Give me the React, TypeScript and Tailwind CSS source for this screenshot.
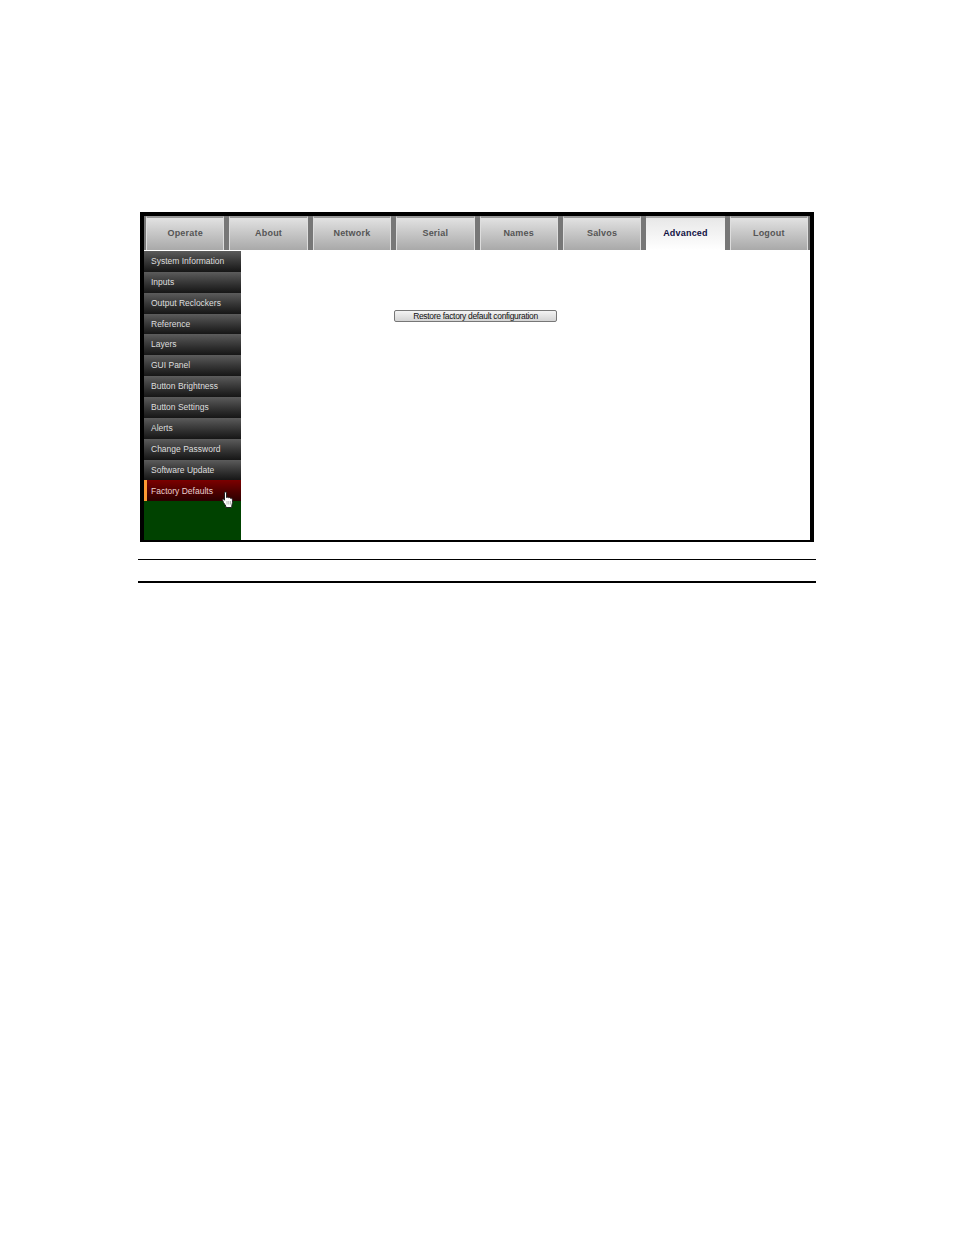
const tabs = ["Operate", "About", "Network", "Serial", "Names", "Salvos", "Advanced", "Logout"];

const menu = [
  "System Information",
  "Inputs",
  "Output Reclockers",
  "Reference",
  "Layers",
  "GUI Panel",
  "Button Brightness",
  "Button Settings",
  "Alerts",
  "Change Password",
  "Software Update",
];

function HandCursor() {
  return (
    <svg className="absolute left-[75px] top-[11px]" width="12" height="18" viewBox="0 0 12 18">
      <path
        d="M2.500 1.800C2.500.6 4.500.6 4.500 1.800V6.500C5 6 6.200 6 6.500 6.800 7 6.300 8.200 6.500 8.400 7.300 9 6.900 10.200 7.200 10.300 8.200 10.700 10.500 10.500 12.500 9.800 14.500V16.500H3.800V15L1.500 11.500.6 9.200C.3 8.200 1.500 7.700 2 8.400L2.500 9.200Z"
        fill="#fff"
        stroke="#222"
        strokeWidth="1"
      />
      <path d="M5 10v3.500M6.800 10v3.500M8.500 10v3.500" stroke="#999" strokeWidth="0.7" />
    </svg>
  );
}

export default function App() {
  return (
    <div className="min-h-[1235px] bg-white pt-[212px] font-['Liberation_Sans',Arial,sans-serif]">
      {/* Screenshot frame */}
      <div className="mx-[140px] w-[674px] h-[330px] border-4 border-b-2 border-black flex flex-col bg-white">
        <div className="grid grid-cols-8 h-[34px] shrink-0 gap-[5px] bg-[#777] px-[2px]">
          {tabs.map((tab) => (
            <div
              key={tab}
              className={
                tab === "Advanced"
                  ? "flex items-center justify-center pb-[1px] border-t-2 border-[#aaa] bg-gradient-to-b from-[#e8e8e8] to-white text-[9px] font-bold text-[#111144] tracking-[0.2px]"
                  : "flex items-center justify-center border-t-2 border-l border-r border-t-[#999] border-l-[#ddd] border-r-[#ddd] bg-gradient-to-b from-[#e2e2e2] to-[#a9a9a9] text-[9px] font-bold text-[#555] tracking-[0.2px]"
              }
            >
              {tab}
            </div>
          ))}
        </div>
        <div className="flex flex-1 min-h-0">
          <div className="w-[97px] shrink-0 flex flex-col bg-[#004200]">
            <div className="h-px bg-white" />
            {menu.map((item) => (
              <div
                key={item}
                className="h-[20.87px] shrink-0 flex items-center pl-[7px] bg-gradient-to-b from-[#5c5c5c] to-[#161616] text-[8.5px] text-[#dedede]"
              >
                {item}
              </div>
            ))}
            <div className="relative h-[21px] shrink-0 flex items-center pl-[4px] border-l-[3px] border-[#ff9a33] bg-gradient-to-b from-[#7c0000] to-[#2c0000] text-[8.5px] text-[#e8d0d0]">
              Factory Defaults
              <HandCursor />
            </div>
          </div>
          <div className="flex-1 pl-[153px] pt-[60px]">
            <button className="w-[163px] h-[12px] flex items-center justify-center rounded-[2px] border border-[#777] bg-gradient-to-b from-[#f4f4f4] to-[#d4d4d4] text-[8.5px] tracking-[-0.32px] text-[#111]">
              Restore factory default configuration
            </button>
          </div>
        </div>
      </div>
      {/* Rules under the figure */}
      <div className="mx-[138px] w-[678px] mt-[17px] h-px bg-black" />
      <div className="mx-[138px] w-[678px] mt-[21px] h-[2px] bg-black" />
    </div>
  );
}
